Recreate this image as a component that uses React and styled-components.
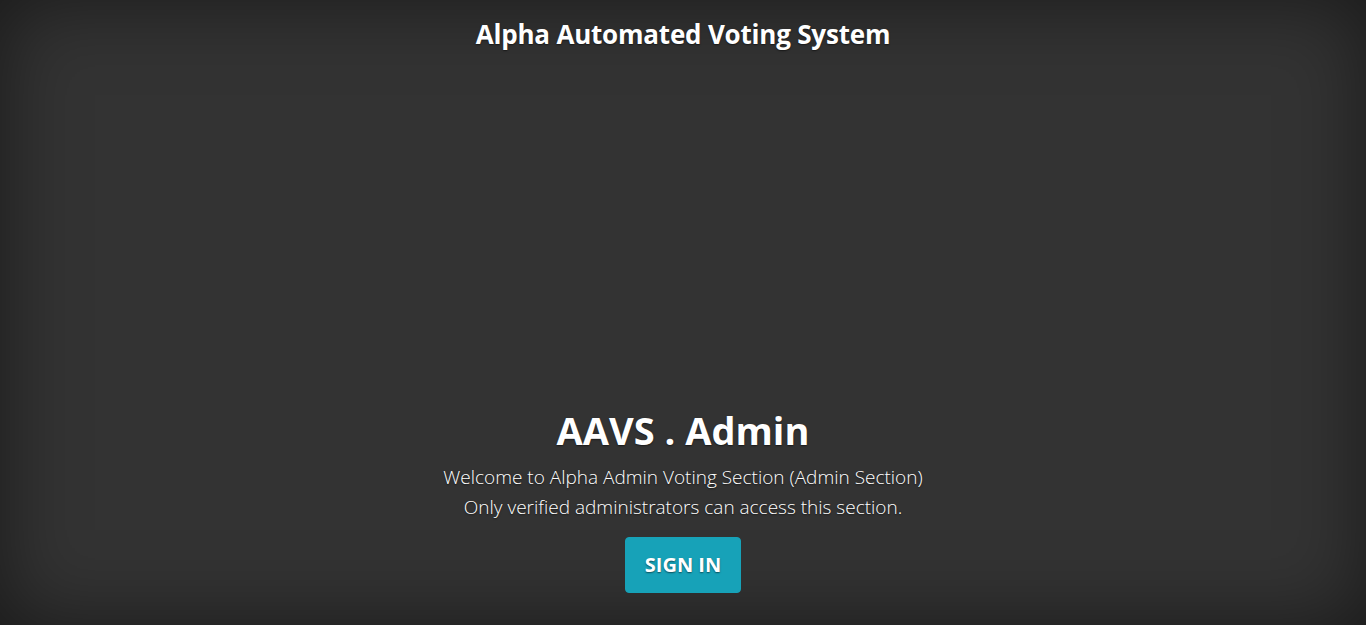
import React from "react";
import styled, { createGlobalStyle } from "styled-components";

const Global = createGlobalStyle`
  html, body { height: 100%; margin: 0; }
  body {
    background-color: #333;
    box-shadow: inset 0 0 5rem rgba(0,0,0,.5);
    color: #fff;
    font-family: "Segoe UI", "Open Sans", "Noto Sans", sans-serif;
    text-shadow: 0 .05rem .1rem rgba(0,0,0,.5);
  }
  #root { height: 100%; }
`;

const Cover = styled.div`
  display: flex;
  flex-direction: column;
  height: 100%;
  max-width: 42em;
  margin: 0 auto;
  padding: 19px 16px 32px;
  box-sizing: border-box;
  text-align: center;
`;

const Masthead = styled.header`
  margin-bottom: auto;
`;

const Brand = styled.h3`
  margin: 0;
  font-size: 26px;
  font-weight: 700;
  line-height: 1.2;
  letter-spacing: -0.2px;
`;

const Inner = styled.main`
  display: flex;
  flex-direction: column;
  align-items: center;
`;

const Title = styled.h1`
  margin: 0 0 8px;
  font-size: 38px;
  font-weight: 700;
  line-height: 1.2;
`;

const Lead = styled.p`
  margin: 0 0 15px;
  font-size: 19px;
  font-weight: 300;
  line-height: 30px;
  color: #fff;
`;

const Button = styled.a`
  display: inline-block;
  padding: 12px 19px;
  border: 1px solid #17a2b8;
  border-radius: 4px;
  background: #17a2b8;
  color: #fff;
  font-size: 20px;
  font-weight: 700;
  line-height: 30px;
  text-decoration: none;
  text-transform: uppercase;
`;

export default function App() {
  return (
    <>
      <Global />
      <Cover>
        <Masthead>
          <Brand>Alpha Automated Voting System</Brand>
        </Masthead>
        <Inner>
          <Title>AAVS . Admin</Title>
          <Lead>
            Welcome to Alpha Admin Voting Section (Admin Section)
            <br />
            Only verified administrators can access this section.
          </Lead>
          <Button href="#">Sign In</Button>
        </Inner>
      </Cover>
    </>
  );
}
